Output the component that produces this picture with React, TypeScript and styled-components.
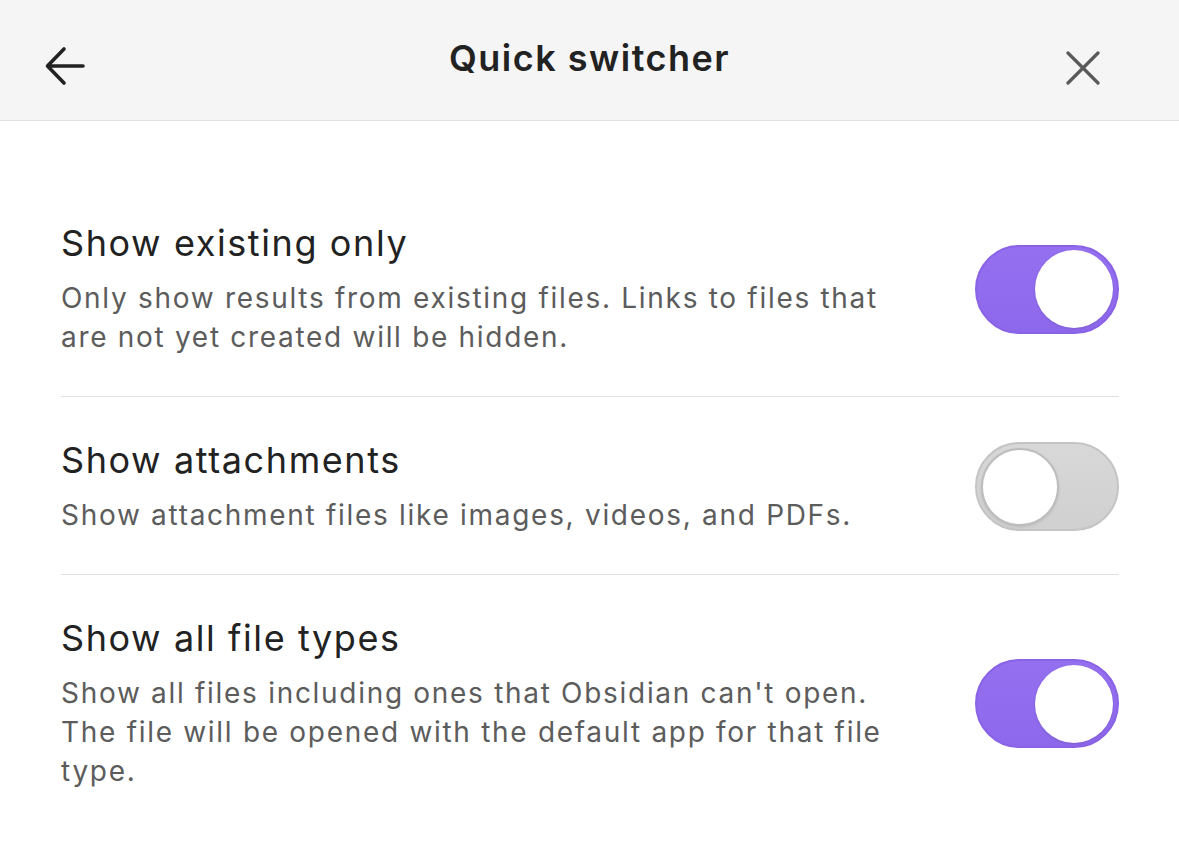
import React, { useState } from "react";
import styled, { createGlobalStyle } from "styled-components";

const Global = createGlobalStyle`
  html, body { margin: 0; padding: 0; background: #ffffff; }
  body { font-family: Inter, "Noto Sans", "Liberation Sans", sans-serif; -webkit-font-smoothing: antialiased; }
  * { box-sizing: border-box; }
`;

const Page = styled.div`
  width: 1179px;
  min-height: 851px;
  background: #ffffff;
  display: flex;
  flex-direction: column;
`;

const Header = styled.header`
  height: 121px;
  background: #f5f5f5;
  border-bottom: 1px solid #e0e0e0;
  display: grid;
  grid-template-columns: 120px 1fr 120px;
  align-items: center;
  padding-bottom: 4px;
`;

const IconButton = styled.button<{ $align: "start" | "end" }>`
  background: none;
  border: none;
  padding: 0;
  width: 120px;
  height: 100%;
  display: flex;
  align-items: center;
  justify-content: ${(p) => (p.$align === "start" ? "flex-start" : "flex-end")};
  padding-top: ${(p) => (p.$align === "start" ? "16px" : "19px")};
  padding-left: ${(p) => (p.$align === "start" ? "44px" : "0")};
  padding-right: ${(p) => (p.$align === "end" ? "79px" : "0")};
  cursor: pointer;
`;

const Title = styled.h1`
  margin: 0;
  text-align: center;
  font-size: 36px;
  font-weight: 600;
  color: #222222;
  letter-spacing: 1.5px;
`;

const List = styled.main`
  padding: 59px 60px 0 61px;
  display: flex;
  flex-direction: column;
`;

const Row = styled.section<{ $last?: boolean }>`
  display: flex;
  align-items: center;
  gap: 84px;
  padding: 41px 0 39px;
  border-bottom: ${(p) => (p.$last ? "none" : "1px solid #e0e0e0")};
`;

const Info = styled.div`
  flex: 1;
  display: flex;
  flex-direction: column;
  gap: 14px;
`;

const Name = styled.div`
  font-size: 36px;
  line-height: 44px;
  letter-spacing: 1.6px;
  color: #222222;
  font-weight: 400;
`;

const Desc = styled.div`
  font-size: 28px;
  line-height: 39px;
  letter-spacing: 1.7px;
  color: #5c5c5c;
  font-weight: 400;
`;

const Track = styled.button<{ $on: boolean }>`
  flex: none;
  width: 144px;
  height: 89px;
  border-radius: 45px;
  padding: 4px;
  cursor: pointer;
  display: flex;
  align-items: center;
  justify-content: ${(p) => (p.$on ? "flex-end" : "flex-start")};
  border: 2px solid ${(p) => (p.$on ? "#8a62e6" : "#c4c4c4")};
  background: ${(p) =>
    p.$on
      ? "linear-gradient(180deg, #9470f0 0%, #8e68ec 100%)"
      : "linear-gradient(180deg, #d8d8d8 0%, #d0d0d0 100%)"};
`;

const Knob = styled.span<{ $on: boolean }>`
  width: 78px;
  height: 78px;
  border-radius: 50%;
  background: #ffffff;
  border: ${(p) => (p.$on ? "none" : "2px solid #bdbdbd")};
  box-shadow: 0 1px 3px rgba(0, 0, 0, 0.12);
`;

const Toggle: React.FC<{ initial: boolean }> = ({ initial }) => {
  const [on, setOn] = useState(initial);
  return (
    <Track $on={on} onClick={() => setOn(!on)} aria-pressed={on}>
      <Knob $on={on} />
    </Track>
  );
};

const settings = [
  {
    name: "Show existing only",
    desc: "Only show results from existing files. Links to files that are not yet created will be hidden.",
    on: true,
  },
  {
    name: "Show attachments",
    desc: "Show attachment files like images, videos, and PDFs.",
    on: false,
  },
  {
    name: "Show all file types",
    desc: "Show all files including ones that Obsidian can't open. The file will be opened with the default app for that file type.",
    on: true,
  },
];

export default function App() {
  return (
    <Page>
      <Global />
      <Header>
        <IconButton $align="start" aria-label="Back">
          <svg width="42" height="42" viewBox="0 0 42 42" fill="none">
            <path d="M39 21H4M20 4L3.5 21L20 38" stroke="#222" strokeWidth="3.6" strokeLinecap="round" strokeLinejoin="round" />
          </svg>
        </IconButton>
        <Title>Quick switcher</Title>
        <IconButton $align="end" aria-label="Close">
          <svg width="34" height="34" viewBox="0 0 34 34" fill="none">
            <path d="M2 2L32 32M32 2L2 32" stroke="#5a5a5a" strokeWidth="3.2" strokeLinecap="round" />
          </svg>
        </IconButton>
      </Header>
      <List>
        {settings.map((s, i) => (
          <Row key={s.name} $last={i === settings.length - 1}>
            <Info>
              <Name>{s.name}</Name>
              <Desc>{s.desc}</Desc>
            </Info>
            <Toggle initial={s.on} />
          </Row>
        ))}
      </List>
    </Page>
  );
}
